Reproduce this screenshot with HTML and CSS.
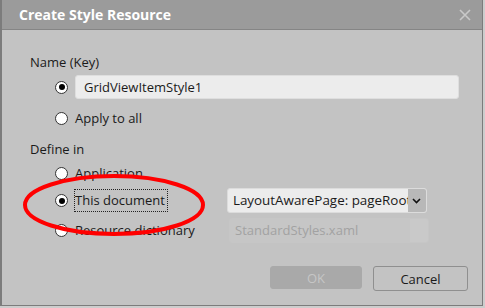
FILE: index.html
```html
<!doctype html>
<html lang="en">
  <head>
    <meta charset="UTF-8" />
    <title>Create Style Resource</title>
    <link rel="stylesheet" href="styles.css">
  </head>
  <body>
    <div class="dialog">
      <div class="titlebar">
        <span class="title">Create Style Resource</span>
        <svg class="close" width="12" height="12" viewBox="0 0 12 12">
          <path d="M1 1 L11 11 M11 1 L1 11" stroke="#c9c9c9" stroke-width="1.6" />
        </svg>
      </div>

      <div class="content">
        <div class="group-label">Name (Key)</div>
        <div class="row row-key">
          <span class="radio checked"></span>
          <div class="textbox">GridViewItemStyle1</div>
        </div>
        <div class="row row-plain">
          <span class="radio"></span>
          <span class="label">Apply to all</span>
        </div>

        <div class="group-label define">Define in</div>
        <div class="row row-plain">
          <span class="radio"></span>
          <span class="label">Application</span>
        </div>
        <div class="row row-combo">
          <span class="radio checked"></span>
          <span class="label focused">This document</span>
          <div class="combo">
            <span class="combo-text">LayoutAwarePage: pageRoot</span>
            <span class="combo-btn">
              <svg width="9" height="6" viewBox="0 0 9 6">
                <path d="M1 1 L4.5 4.5 L8 1" fill="none" stroke="#111" stroke-width="1.6" />
              </svg>
            </span>
          </div>
        </div>
        <div class="row row-combo last">
          <span class="radio"></span>
          <span class="label">Resource dictionary</span>
          <div class="combo disabled">
            <span class="combo-text">StandardStyles.xaml</span>
            <span class="combo-btn"></span>
          </div>
        </div>

        <div class="buttons">
          <button class="btn ok" disabled>OK</button>
          <button class="btn cancel">Cancel</button>
        </div>

        <svg class="highlight" width="184" height="66" viewBox="0 0 184 66">
          <ellipse cx="92" cy="33" rx="89" ry="29" fill="none" stroke="#ff0000" stroke-width="4" />
        </svg>
      </div>
    </div>
  </body>
</html>
```

FILE: styles.css
```css
body {
  margin: 0;
  background-color: #cdcdcd;
  font-family: 'Open Sans', 'Noto Sans', sans-serif;
  font-size: 13px;
  color: #1a1a1a;
}
.dialog {
  width: 480px;
  height: 305px;
  border-left: 2px solid #7c7c7c;
  border-right: 1px solid #7c7c7c;
  border-bottom: 1px solid #7c7c7c;
  background-color: #c3c3c3;
  display: flex;
  flex-direction: column;
}
.titlebar {
  height: 29px;
  flex-shrink: 0;
  background-color: #9b9b9b;
  border-bottom: 1px solid #858585;
  display: flex;
  align-items: center;
  justify-content: space-between;
  padding: 0 11px 0 17px;
}
.title {
  color: #fff;
  font-weight: bold;
  font-size: 14px;
}
.content {
  position: relative;
  flex-grow: 1;
  padding: 22px 0 0 28px;
}
.group-label {
  height: 20px;
  line-height: 20px;
}
.group-label.define {
  margin-top: 11px;
}
.row {
  display: flex;
  align-items: center;
  padding-left: 25px;
}
.row-key {
  height: 24px;
  margin-top: 3px;
}
.row-plain {
  height: 20px;
  margin-top: 9px;
}
.group-label + .row-plain {
  margin-top: 4px;
}
.row-combo {
  height: 25px;
  margin-top: 5px;
}
.row-combo.last {
  height: 23px;
  margin-top: 6px;
}
.radio {
  width: 11px;
  height: 11px;
  border: 1px solid #333;
  border-radius: 50%;
  background-color: #fff;
  margin-right: 7px;
  flex-shrink: 0;
  display: flex;
  align-items: center;
  justify-content: center;
}
.radio.checked::after {
  content: '';
  width: 6px;
  height: 6px;
  border-radius: 50%;
  background-color: #000;
}
.label {
  padding: 1px 2px 2px 0;
  width: 150px;
}
.label.focused {
  width: auto;
  outline: 1px dotted #222;
  outline-offset: 0;
  margin-right: 60px;
}
.textbox {
  width: 374px;
  height: 22px;
  line-height: 22px;
  padding-left: 8px;
  background-color: #ececec;
  border: 1px solid #dedede;
  border-radius: 3px;
}
.combo {
  width: 198px;
  height: 23px;
  display: flex;
  background-color: #ececec;
  border: 1px solid #dcdcdc;
  border-radius: 3px;
  overflow: hidden;
}
.row-combo.last .label {
  margin-right: 2px;
}
.combo-text {
  flex-grow: 1;
  padding-left: 5px;
  line-height: 23px;
  font-size: 13.4px;
  white-space: nowrap;
  overflow: hidden;
}
.combo-btn {
  width: 18px;
  flex-shrink: 0;
  background-color: #b8b8b8;
  display: flex;
  align-items: center;
  justify-content: center;
}
.combo.disabled {
  background-color: #c6c6c6;
  border-color: #c6c6c6;
}
.combo.disabled .combo-text {
  color: #a2a2a2;
  font-size: 13px;
}
.combo.disabled .combo-btn {
  background-color: #c9c9c9;
}
.buttons {
  display: flex;
  justify-content: flex-end;
  gap: 11px;
  margin-top: 24px;
  padding-right: 14px;
}
.btn {
  width: 92px;
  height: 23px;
  font-family: inherit;
  font-size: 13px;
  border-radius: 3px;
}
.btn.ok {
  background-color: #a9a9a9;
  border: 1px solid #a9a9a9;
  color: #c6c6c6;
}
.btn.cancel {
  width: 95px;
  height: 25px;
  background-color: #c3c3c3;
  border: 1px solid #8f8f8f;
  color: #1a1a1a;
}
.highlight {
  position: absolute;
  left: 20px;
  top: 142px;
}
```
